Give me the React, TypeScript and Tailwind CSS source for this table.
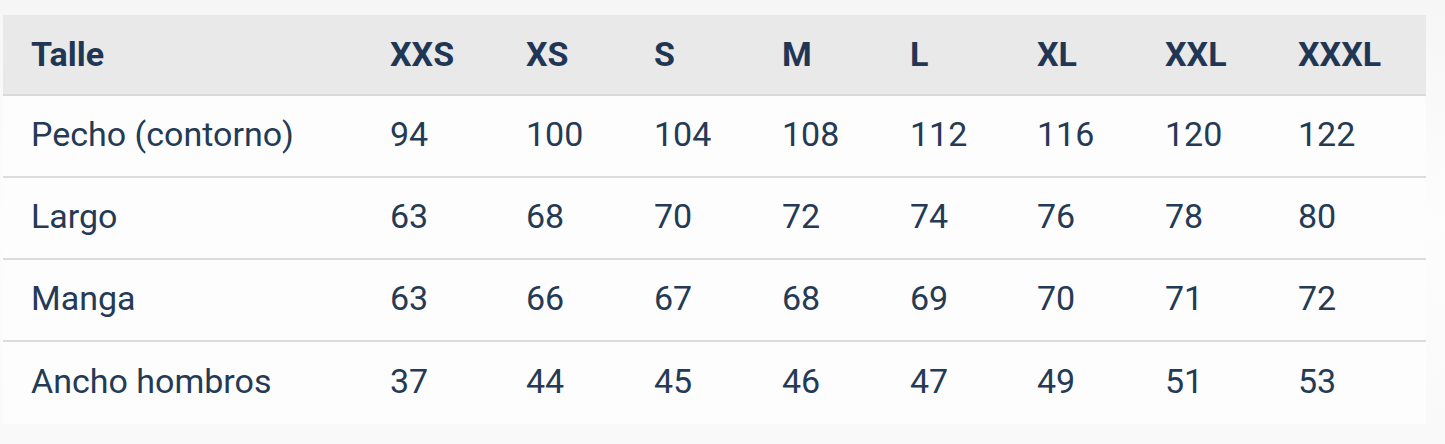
const SIZES = ["XXS", "XS", "S", "M", "L", "XL", "XXL", "XXXL"];

const ROWS: { label: string; values: number[] }[] = [
  { label: "Pecho (contorno)", values: [94, 100, 104, 108, 112, 116, 120, 122] },
  { label: "Largo", values: [63, 68, 70, 72, 74, 76, 78, 80] },
  { label: "Manga", values: [63, 66, 67, 68, 69, 70, 71, 72] },
  { label: "Ancho hombros", values: [37, 44, 45, 46, 47, 49, 51, 53] },
];

const GRID =
  "grid grid-cols-[359px_136px_128px_128px_128px_127px_128px_133px_156px]";

export default function App() {
  return (
    <div
      className="w-[1445px] h-[444px] bg-gradient-to-b from-[#f6f6f6] via-[#fdfdfd] to-[#f9f9f9] pt-[15px] pl-[3px] overflow-hidden"
      style={{ fontFamily: "Roboto, 'Liberation Sans', sans-serif" }}
    >
      <div className="w-[1423px] bg-[#fdfdfd] text-[#1f3754]">
        {/* Header */}
        <div className={`${GRID} h-[81px] items-center bg-[#e9e9e9] border-b-2 border-[#dadada]`}>
          <div className="pl-[28px] text-[34px] font-bold">Talle</div>
          {SIZES.map((s) => (
            <div key={s} className="pl-[28px] text-[34px] font-bold">
              {s}
            </div>
          ))}
        </div>

        {/* Rows */}
        {ROWS.map((row, i) => (
          <div
            key={row.label}
            className={`${GRID} h-[82px] items-center pb-[4px] ${
              i < ROWS.length - 1 ? "border-b-2 border-[#dcdcdc]" : ""
            }`}
          >
            <div className="pl-[28px] text-[34px] text-[#243a55]">{row.label}</div>
            {row.values.map((v, j) => (
              <div key={j} className="pl-[28px] text-[34px] text-[#243a55]">
                {v}
              </div>
            ))}
          </div>
        ))}
      </div>
    </div>
  );
}
